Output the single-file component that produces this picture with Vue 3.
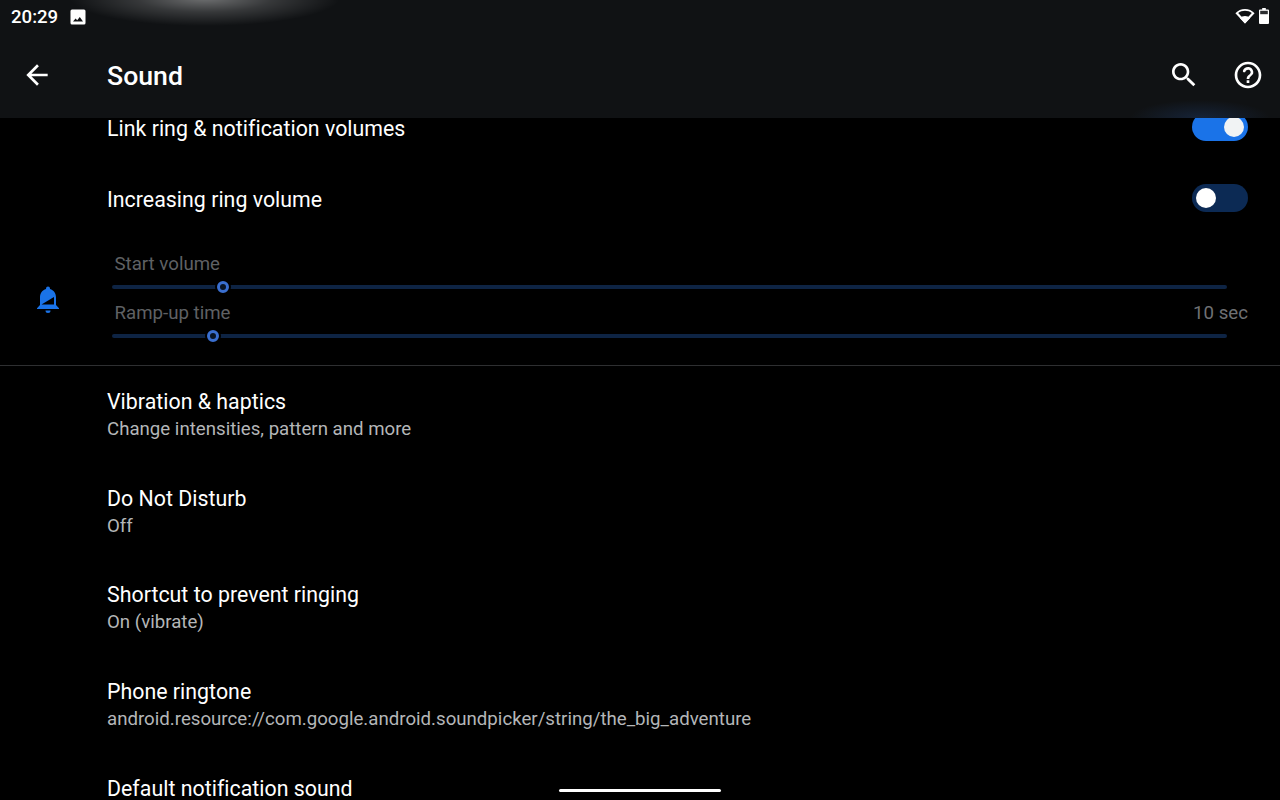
<template>
  <div class="screen">
    <header class="appbar">
      <div class="glow-white"></div>
      <div class="glow-blue"></div>
      <div class="status">
        <div class="status-left">
          <span class="time">20:29</span>
          <svg class="img-icon" viewBox="0 0 16 16" width="16" height="16">
            <path fill="#fff" fill-rule="evenodd" d="M2 0.5h12a1.5 1.5 0 0 1 1.5 1.5v12a1.5 1.5 0 0 1-1.5 1.5H2A1.5 1.5 0 0 1 .5 14V2A1.5 1.5 0 0 1 2 .5zM3 12.5h10L9.8 8 7.2 11.2 5.6 9.4z"/>
          </svg>
        </div>
        <div class="status-right">
          <svg viewBox="0 0 20 16" width="20" height="16">
            <path fill="#fff" fill-rule="evenodd" d="M10 15.500L.4 5.200C3 2.600 6.300 1 10 1s7 1.600 9.600 4.200zM10 12.400L16.800 5.100C14.900 3.600 12.600 2.800 10 2.800S5.100 3.600 3.200 5.100z"/>
            <path fill="#fff" d="M10 15.500L4.800 9.900C6.200 8.700 8 8 10 8s3.800.7 5.200 1.900z"/>
          </svg>
          <svg viewBox="0 0 10 16" width="10" height="16">
            <path fill="#fff" d="M3.200 0h3.600v1.500H9a1 1 0 0 1 1 1V15a1 1 0 0 1-1 1H1a1 1 0 0 1-1-1V2.500a1 1 0 0 1 1-1h2.200z"/>
            <path fill="#2b2d2f" d="M1.200 2.800h7.600v3.400H1.200z"/>
          </svg>
        </div>
      </div>
      <div class="toolbar">
        <svg class="back" viewBox="0 0 24 24" width="32" height="32">
          <path fill="#fff" d="M20 11H7.830l5.590-5.590L12 4l-8 8 8 8 1.410-1.410L7.830 13H20v-2z"/>
        </svg>
        <h1 class="title">Sound</h1>
        <svg class="search" viewBox="0 0 24 24" width="32" height="32">
          <path fill="#fff" d="M15.500 14h-.79l-.28-.27C15.410 12.590 16 11.110 16 9.500 16 5.910 13.090 3 9.500 3S3 5.910 3 9.500 5.910 16 9.500 16c1.610 0 3.090-.59 4.230-1.570l.27.28v.79l5 4.990L20.490 19l-4.990-5zm-6 0C7.010 14 5 11.990 5 9.500S7.010 5 9.500 5 14 7.010 14 9.500 11.990 14 9.500 14z"/>
        </svg>
        <svg class="help" viewBox="0 0 24 24" width="32" height="32">
          <path fill="#fff" d="M12 2C6.480 2 2 6.480 2 12s4.480 10 10 10 10-4.480 10-10S17.520 2 12 2zm0 18c-4.410 0-8-3.590-8-8s3.590-8 8-8 8 3.590 8 8-3.590 8-8 8zm-1-4h2v2h-2zm1.610-9.960c-2.060-.3-3.880.97-4.430 2.790-.18.58.26 1.170.87 1.170h.2c.41 0 .74-.29.88-.67.32-.89 1.270-1.500 2.300-1.280.95.2 1.650 1.130 1.570 2.100-.1 1.340-1.620 1.630-2.450 2.880 0 .01-.01.01-.01.02-.01.02-.02.03-.03.05-.09.15-.18.32-.25.5-.01.03-.03.05-.04.08-.01.02-.01.04-.02.07-.12.34-.2.75-.2 1.250h2c0-.42.11-.77.28-1.070.02-.03.03-.06.05-.09.08-.14.18-.27.28-.39.01-.01.02-.03.03-.04.1-.12.21-.23.33-.34.96-.91 2.260-1.650 1.990-3.560-.24-1.740-1.610-3.210-3.350-3.470z"/>
        </svg>
      </div>
    </header>

    <main class="list">
      <div class="switch-row">
        <span class="row-title">Link ring &amp; notification volumes</span>
        <span class="switch on"><span class="knob"></span></span>
      </div>
      <div class="switch-row">
        <span class="row-title">Increasing ring volume</span>
        <span class="switch off"><span class="knob"></span></span>
      </div>

      <section class="sliders">
        <div class="bell-col">
          <svg viewBox="0 0 24 30" width="24" height="30">
            <path fill="#1a73e8" d="M12 1.500a2 2 0 0 1 2 2v.6c3.700 1 6 4.300 6 8.400V20l3 3.200v.8H1v-.8L4 20v-7.500c0-4.100 2.300-7.400 6-8.400v-.6a2 2 0 0 1 2-2z"/>
            <path fill="#1a73e8" d="M9.500 25.500h5a2.500 2.500 0 0 1-5 0z"/>
            <path fill="#000" d="M5.500 19.500L18 12v7.500z"/>
          </svg>
        </div>
        <div class="slider-col">
          <div v-for="s in sliders" :key="s.label" class="slider">
            <div class="slider-head">
              <span>{{ s.label }}</span>
              <span>{{ s.value }}</span>
            </div>
            <div class="track-wrap">
              <div class="track"></div>
              <span class="thumb" :style="{ left: s.pos + 'px' }"></span>
            </div>
          </div>
        </div>
      </section>

      <div class="divider"></div>

      <div v-for="r in rows" :key="r.title" class="text-row">
        <div class="row-title">{{ r.title }}</div>
        <div class="row-sub">{{ r.sub }}</div>
      </div>
    </main>

    <div class="nav-pill"></div>
  </div>
</template>

<script setup>
const sliders = [
  { label: 'Start volume', value: '', pos: 105 },
  { label: 'Ramp-up time', value: '10 sec', pos: 95 }
]
const rows = [
  { title: 'Vibration & haptics', sub: 'Change intensities, pattern and more' },
  { title: 'Do Not Disturb', sub: 'Off' },
  { title: 'Shortcut to prevent ringing', sub: 'On (vibrate)' },
  { title: 'Phone ringtone', sub: 'android.resource://com.google.android.soundpicker/string/the_big_adventure' },
  { title: 'Default notification sound', sub: '' }
]
</script>

<style scoped>
.screen {
  position: relative;
  width: 1280px;
  height: 800px;
  overflow: hidden;
  background: #000;
  color: #fff;
  font-family: Roboto, "Noto Sans", sans-serif;
  display: flex;
  flex-direction: column;
}
.appbar {
  position: relative;
  flex: none;
  height: 118px;
  overflow: hidden;
  background: #101214;
  z-index: 2;
  display: flex;
  flex-direction: column;
}
.glow-white {
  position: absolute;
  left: 70px;
  top: -30px;
  width: 270px;
  height: 56px;
  border-radius: 50%;
  background: radial-gradient(closest-side, rgba(255, 255, 255, 0.4), rgba(255, 255, 255, 0.16) 50%, rgba(255, 255, 255, 0));
}
.glow-blue {
  position: absolute;
  left: 1130px;
  top: 100px;
  width: 140px;
  height: 36px;
  background: radial-gradient(closest-side, rgba(40, 90, 170, 0.24), rgba(40, 90, 170, 0));
}
.status {
  position: relative;
  height: 33px;
  padding: 0 11px 0 11px;
  display: flex;
  align-items: center;
  justify-content: space-between;
}
.status-left,
.status-right {
  display: flex;
  align-items: center;
}
.status-left {
  gap: 12px;
}
.status-right {
  gap: 4px;
  margin-top: -1px;
}
.time {
  font-size: 18.6px;
  font-weight: 500;
}
.toolbar {
  position: relative;
  flex: 1;
  display: flex;
  align-items: center;
  padding: 0 16px 2px 21px;
}
.back {
  flex: none;
}
.title {
  margin: 2px 0 0 54px;
  flex: 1;
  font-size: 26.67px;
  font-weight: 500;
  line-height: 34px;
}
.search {
  margin-right: 32px;
}
.list {
  flex: 1;
  min-height: 0;
  overflow: hidden;
}
.switch-row {
  height: 71px;
  padding: 0 32px 0 107px;
  display: flex;
  align-items: center;
  justify-content: space-between;
}
.switch-row:first-child {
  margin-top: -25.500px;
}
.row-title {
  font-size: 21.33px;
  line-height: 27px;
  letter-spacing: 0.02px;
  color: #fff;
}
.switch {
  width: 56px;
  height: 28px;
  margin-bottom: 2px;
  border-radius: 14px;
  display: flex;
  align-items: center;
  padding: 0 4px;
  box-sizing: border-box;
}
.switch.on {
  background: #1a73e8;
  justify-content: flex-end;
}
.switch.off {
  background: #0c2a54;
}
.knob {
  width: 20px;
  height: 20px;
  border-radius: 50%;
  background: #f1f3f4;
}
.switch.off .knob {
  background: #fff;
}
.sliders {
  height: 130px;
  display: flex;
  align-items: center;
}
.bell-col {
  width: 112px;
  flex: none;
  padding-left: 36px;
  box-sizing: border-box;
  display: flex;
  height: 30px;
  margin-top: 0;
}
.slider-col {
  flex: 1;
  margin-top: 3px;
  padding-right: 32px;
}
.slider {
  height: 49.500px;
}
.slider-head {
  display: flex;
  justify-content: space-between;
  padding-left: 2.500px;
  font-size: 18.67px;
  line-height: 24px;
  color: #5f6164;
}
.slider-head span:last-child {
  color: #6f7174;
}
.track-wrap {
  position: relative;
  width: 1115px;
  height: 12px;
  margin-top: 5px;
  display: flex;
  align-items: center;
}
.track {
  width: 100%;
  height: 4px;
  border-radius: 2px;
  background: #0e2444;
}
.thumb {
  position: absolute;
  top: 0;
  width: 12px;
  height: 12px;
  box-sizing: border-box;
  border: 3px solid #3a6fd0;
  border-radius: 50%;
  background: #081425;
  box-shadow: 0 0 0 2px #000;
}
.divider {
  height: 1px;
  background: #2e2f31;
}
.text-row {
  height: 96.670px;
  padding: 22.500px 32px 0 107px;
  box-sizing: border-box;
}
.row-sub {
  margin-top: 1px;
  font-size: 18.67px;
  line-height: 26px;
  color: #b4b6b8;
}
.nav-pill {
  position: absolute;
  left: 559px;
  bottom: 8px;
  width: 162px;
  height: 3px;
  border-radius: 2px;
  background: #fff;
  z-index: 3;
}
</style>
